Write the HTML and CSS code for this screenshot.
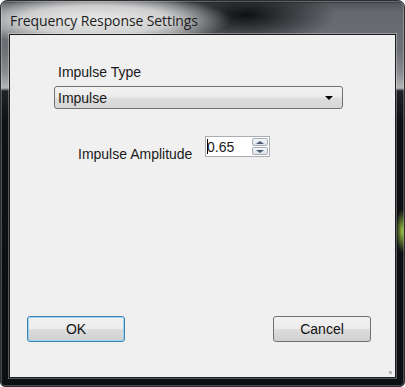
FILE: index.html
```html
<!DOCTYPE html>
<html lang="en">
<head>
    <meta charset="UTF-8">
    <title>Frequency Response Settings</title>
    <link rel="stylesheet" href="styles.css">
</head>
<body>
    <div class="window">
        <div class="titlebar">
            <span class="title">Frequency Response Settings</span>
        </div>
        <div class="client">
            <div class="type-group">
                <label class="field-label">Impulse Type</label>
                <div class="combo">
                    <span>Impulse</span>
                    <span class="combo-arrow"></span>
                </div>
            </div>

            <div class="amp-row">
                <label class="field-label">Impulse Amplitude</label>
                <div class="spinbox">
                    <span class="spin-value"><span class="caret"></span>0.65</span>
                    <div class="spin-btns">
                        <div class="spin-btn"><span class="tri-up"></span></div>
                        <div class="spin-btn"><span class="tri-down"></span></div>
                    </div>
                </div>
            </div>

            <div class="button-row">
                <button class="btn btn-default">OK</button>
                <button class="btn">Cancel</button>
            </div>
            <span class="grip"></span>
        </div>
    </div>
</body>
</html>
```

FILE: styles.css
```css
* {
    margin: 0;
    padding: 0;
    box-sizing: border-box;
}

body {
    background: #ffffff;
    font-family: "Liberation Sans", Arial, sans-serif;
    font-size: 14px;
    line-height: 16px;
    color: #1a1a1a;
}

.window {
    width: 405px;
    height: 387px;
    display: flex;
    flex-direction: column;
    padding: 0 8px 8px 8px;
    border: 1px solid #2c2e31;
    border-radius: 7px 7px 5px 5px;
    background:
        radial-gradient(ellipse 135px 26px at 95px 19px, rgba(238, 238, 238, 0.97) 0%, rgba(225, 225, 225, 0.85) 55%, rgba(200, 200, 200, 0) 100%),
        radial-gradient(ellipse 90px 30px at 245px 14px, rgba(8, 10, 14, 0.95) 0%, rgba(8, 10, 14, 0) 100%),
        radial-gradient(ellipse 6px 22px at 401px 230px, rgba(170, 210, 70, 0.9) 0%, rgba(170, 210, 70, 0) 100%),
        linear-gradient(to bottom, #2e3034 0, #55585c 3px, #65686c 12px, #6e7175 50px, #8a8c8f 72px, #b4b6b8 87px, #202226 90px, #0e1013 120px, #0c0e11 100%);
    box-shadow: inset 0 0 0 1px rgba(255, 255, 255, 0.25);
}

.titlebar {
    height: 33px;
    padding: 6px 0 0 1px;
    display: flex;
    align-items: center;
}

.title {
    font-family: "Open Sans", "Noto Sans", sans-serif;
    font-size: 14px;
    letter-spacing: -0.1px;
    color: #1c1c1c;
}

.client {
    flex: 1;
    position: relative;
    display: flex;
    flex-direction: column;
    background: #f0f0f0;
    border: 1px solid #1b1d20;
    box-shadow: 0 0 0 1px rgba(255, 255, 255, 0.3);
}

.field-label {
    display: block;
}

.type-group {
    margin: 29px 0 0 44px;
    width: 289px;
}

.type-group .field-label {
    margin: 0 0 6px 4px;
}

.combo {
    height: 23px;
    display: flex;
    align-items: center;
    justify-content: space-between;
    padding: 0 9px 0 3px;
    border: 1px solid #707070;
    border-radius: 3px;
    background: linear-gradient(to bottom, #f3f3f3 0%, #ebebeb 48%, #dedede 52%, #d6d6d6 100%);
}

.combo-arrow {
    width: 0;
    height: 0;
    border-left: 4px solid transparent;
    border-right: 4px solid transparent;
    border-top: 4px solid #000;
}

.amp-row {
    display: flex;
    align-items: flex-start;
    margin: 27px 0 0 68px;
}

.amp-row .field-label {
    margin-top: 10px;
    width: 127px;
}

.spinbox {
    width: 65px;
    height: 21px;
    display: flex;
    align-items: center;
    justify-content: space-between;
    background: #ffffff;
    border: 1px solid #abadb3;
    padding: 0 1px 0 1px;
}

.spin-value {
    display: flex;
    align-items: center;
}

.caret {
    width: 1px;
    height: 15px;
    background: #000;
    margin-right: -1px;
}

.spin-btns {
    display: flex;
    flex-direction: column;
    gap: 1px;
}

.spin-btn {
    width: 16px;
    height: 8px;
    display: flex;
    align-items: center;
    justify-content: center;
    border: 1px solid #a7aeb8;
    border-radius: 2px;
    background: linear-gradient(to bottom, #f4f6f8, #dde3ea);
}

.tri-up,
.tri-down {
    width: 0;
    height: 0;
    border-left: 4px solid transparent;
    border-right: 4px solid transparent;
}

.tri-up {
    border-bottom: 3px solid #4a5a70;
}

.tri-down {
    border-top: 3px solid #4a5a70;
}

.button-row {
    margin: auto 0 35px 0;
    padding: 0 24px 0 17px;
    display: flex;
    justify-content: space-between;
}

.btn {
    width: 98px;
    height: 26px;
    font-family: "Liberation Sans", Arial, sans-serif;
    font-size: 14px;
    color: #111;
    border: 1px solid #707070;
    border-radius: 3px;
    background: linear-gradient(to bottom, #f2f2f2 0%, #ebebeb 48%, #dddddd 52%, #cfcfcf 100%);
}

.btn-default {
    border-color: #3c7fb1;
    box-shadow: inset 0 0 0 1px #9fd5f2;
}

.grip {
    position: absolute;
    right: 3px;
    bottom: 3px;
    width: 3px;
    height: 3px;
    background: #b8b8b8;
}
```
